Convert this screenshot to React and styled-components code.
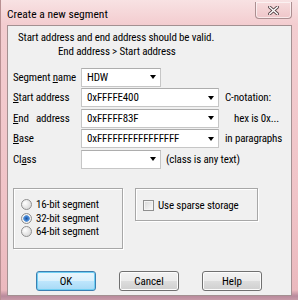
import React from 'react';
import styled, { createGlobalStyle } from 'styled-components';

const GlobalStyle = createGlobalStyle`
  html, body {
    margin: 0;
    padding: 0;
    background: #fff;
  }
  body {
    font-family: "Roboto Condensed", "Liberation Sans", sans-serif;
    font-size: 11px;
    letter-spacing: -0.15px;
    color: #000;
  }
`;

const fields = [
    { label: 'Segment name', key: 8, value: 'HDW', width: 80 },
    { label: 'Start address', key: 0, value: '0xFFFFE400', width: 138, note: 'C-notation:', noteGap: 6 },
    { label: 'End   address', key: 0, value: '0xFFFFF83F', width: 138, note: 'hex is 0x...', noteGap: 15 },
    { label: 'Base', key: 0, value: '0xFFFFFFFFFFFFFFFF', width: 138, note: 'in paragraphs', noteGap: 6 },
    { label: 'Class', key: 2, value: '', width: 80, note: '(class is any text)', noteGap: 5 },
];

const radios = [
    { text: '16-bit segment', checked: false },
    { text: '32-bit segment', checked: true },
    { text: '64-bit segment', checked: false },
];

// underline the access key letter
function AccessLabel({ text, at }) {
    return (
        <>
            {text.slice(0, at)}
            <u>{text.charAt(at)}</u>
            {text.slice(at + 1)}
        </>
    );
}

function App() {
    return (
        <>
            <GlobalStyle />
            <Styled.Window>
                <Styled.TitleBar>
                    <Styled.Title>Create a new segment</Styled.Title>
                    <Styled.CloseBtn>
                        <svg width="11" height="9" viewBox="0 0 11 9">
                            <path d="M1.5 1 L9.5 8 M9.5 1 L1.5 8" stroke="#5a4648" strokeWidth="3.2" strokeLinecap="square" />
                            <path d="M1.5 1 L9.5 8 M9.5 1 L1.5 8" stroke="#fff" strokeWidth="1.4" strokeLinecap="square" />
                        </svg>
                    </Styled.CloseBtn>
                </Styled.TitleBar>
                <Styled.Client>
                    <Styled.Message>
                        <Styled.MsgLine indent={5}>Start address and end address should be valid.</Styled.MsgLine>
                        <Styled.MsgLine indent={45}>End address &gt; Start address</Styled.MsgLine>
                    </Styled.Message>

                    <Styled.Form>
                        {fields.map((f, index) => (
                            <Styled.Row key={index}>
                                <Styled.Label>
                                    <AccessLabel text={f.label} at={f.key} />
                                </Styled.Label>
                                <Styled.Combo width={f.width}>
                                    <Styled.ComboValue>{f.value}</Styled.ComboValue>
                                    <Styled.Arrow />
                                </Styled.Combo>
                                {f.note ? <Styled.Note gap={f.noteGap}>{f.note}</Styled.Note> : ''}
                            </Styled.Row>
                        ))}
                    </Styled.Form>

                    <Styled.Groups>
                        <Styled.GroupBox width={110} height={61} padTop={9}>
                            {radios.map((r, index) => (
                                <Styled.OptionRow key={index}>
                                    <Styled.Radio checked={r.checked} />
                                    <span>{r.text}</span>
                                </Styled.OptionRow>
                            ))}
                        </Styled.GroupBox>
                        <Styled.GroupBox width={123} height={33} padTop={10}>
                            <Styled.OptionRow>
                                <Styled.Check />
                                <span>Use sparse storage</span>
                            </Styled.OptionRow>
                        </Styled.GroupBox>
                    </Styled.Groups>

                    <Styled.Buttons>
                        <Styled.Btn primary>OK</Styled.Btn>
                        <Styled.Btn>Cancel</Styled.Btn>
                        <Styled.Btn>Help</Styled.Btn>
                    </Styled.Buttons>
                </Styled.Client>
            </Styled.Window>
        </>
    );
}

const Styled = {
    Window: styled.div`
        width: 298px;
        height: 300px;
        box-sizing: border-box;
        display: flex;
        flex-direction: column;
        padding: 0 6px 4px 6px;
        border-left: 1px solid #b89092;
        background: linear-gradient(to bottom, #f8e2e3 0px, #f3cdd0 24px, #f0c3c7 200px, #ebb9be 290px, #b98a9c 296px, #c79aa8 300px);
    `,
    TitleBar: styled.div`
        height: 25px;
        display: flex;
        justify-content: space-between;
        align-items: flex-start;
        flex-shrink: 0;
    `,
    Title: styled.div`
        padding-top: 7px;
        font-size: 11.5px;
        letter-spacing: 0;
        line-height: 14px;
        color: #000;
    `,
    CloseBtn: styled.div`
        margin-top: 2px;
        width: 37px;
        height: 17px;
        box-sizing: border-box;
        display: flex;
        align-items: center;
        justify-content: center;
        border: 1px solid #ab8f91;
        border-top: none;
        border-radius: 0 0 4px 4px;
        background: linear-gradient(to bottom, #f7dcdd, #efc6c9);
        box-shadow: inset 0 0 0 1px rgba(255, 255, 255, 0.6);
    `,
    Client: styled.div`
        flex: 1;
        display: flex;
        flex-direction: column;
        background: #f0f0f0;
        border: 1px solid #a39091;
        padding: 0 5px;
    `,
    Message: styled.div`
        padding-top: 5px;
    `,
    MsgLine: styled.div`
        line-height: 14px;
        margin-left: ${props => props.indent}px;
    `,
    Form: styled.div`
        margin-top: 8px;
        display: flex;
        flex-direction: column;
    `,
    Row: styled.div`
        display: flex;
        align-items: center;
        height: 20px;
        & + & {
            margin-top: 0.5px;
        }
    `,
    Label: styled.div`
        width: 68px;
        flex-shrink: 0;
        white-space: pre;
    `,
    Combo: styled.div`
        width: ${props => props.width}px;
        flex-shrink: 0;
        height: 19px;
        box-sizing: border-box;
        display: flex;
        align-items: center;
        background: #fff;
        border: 1px solid #c6c6c6;
        border-top-color: #adadad;
    `,
    ComboValue: styled.div`
        flex: 1;
        padding-left: 5px;
        white-space: nowrap;
    `,
    Arrow: styled.div`
        width: 0;
        height: 0;
        margin-right: 4px;
        border-left: 3.5px solid transparent;
        border-right: 3.5px solid transparent;
        border-top: 4px solid #000;
    `,
    Note: styled.div`
        margin-left: ${props => props.gap}px;
        white-space: nowrap;
    `,
    Groups: styled.div`
        margin-top: 19px;
        display: flex;
        align-items: flex-start;
        gap: 12px;
    `,
    GroupBox: styled.div`
        width: ${props => props.width}px;
        height: ${props => props.height}px;
        box-sizing: border-box;
        padding: ${props => props.padTop}px 0 0 7px;
        border: 1px solid #a7a7a7;
        box-shadow: inset 1px 1px 0 #fff, 1px 1px 0 #fff;
        display: flex;
        flex-direction: column;
    `,
    OptionRow: styled.div`
        display: flex;
        align-items: center;
        height: 13.5px;
        gap: 4px;
    `,
    Radio: styled.div`
        width: 11px;
        height: 11px;
        box-sizing: border-box;
        border-radius: 50%;
        border: 1px solid #8f8f8f;
        background: ${props => props.checked
            ? 'radial-gradient(circle, #1f4f95 0, #3b7fd0 2px, #6aa0dd 3px, #f4f4f4 3.6px, #dcdcdc 100%)'
            : 'radial-gradient(circle at 35% 35%, #ffffff 0, #e6e6e6 50%, #cfcfcf 100%)'};
    `,
    Check: styled.div`
        width: 11px;
        height: 11px;
        box-sizing: border-box;
        border: 1px solid #8f8f8f;
        background: linear-gradient(135deg, #d8d8d8, #fbfbfb);
        box-shadow: inset 0 0 0 1px #f4f4f4;
    `,
    Buttons: styled.div`
        margin-top: 22px;
        padding-left: 23px;
        display: flex;
        gap: 23px;
    `,
    Btn: styled.button`
        width: 60px;
        height: 20px;
        padding: 0;
        font-family: inherit;
        font-size: 11px;
        color: #000;
        border-radius: 3px;
        border: 1px solid ${props => props.primary ? '#3c7fb1' : '#707070'};
        background: ${props => props.primary
            ? 'linear-gradient(to bottom, #eaf6fd 0%, #d9f0fc 50%, #bee6fd 51%, #a7d9f5 100%)'
            : 'linear-gradient(to bottom, #f2f2f2 0%, #ebebeb 50%, #dddddd 51%, #cfcfcf 100%)'};
        box-shadow: inset 0 0 0 1px ${props => props.primary ? '#6fcff3' : '#fcfcfc'};
        &:focus {
            outline: none;
        }
    `,
};

export default App;
